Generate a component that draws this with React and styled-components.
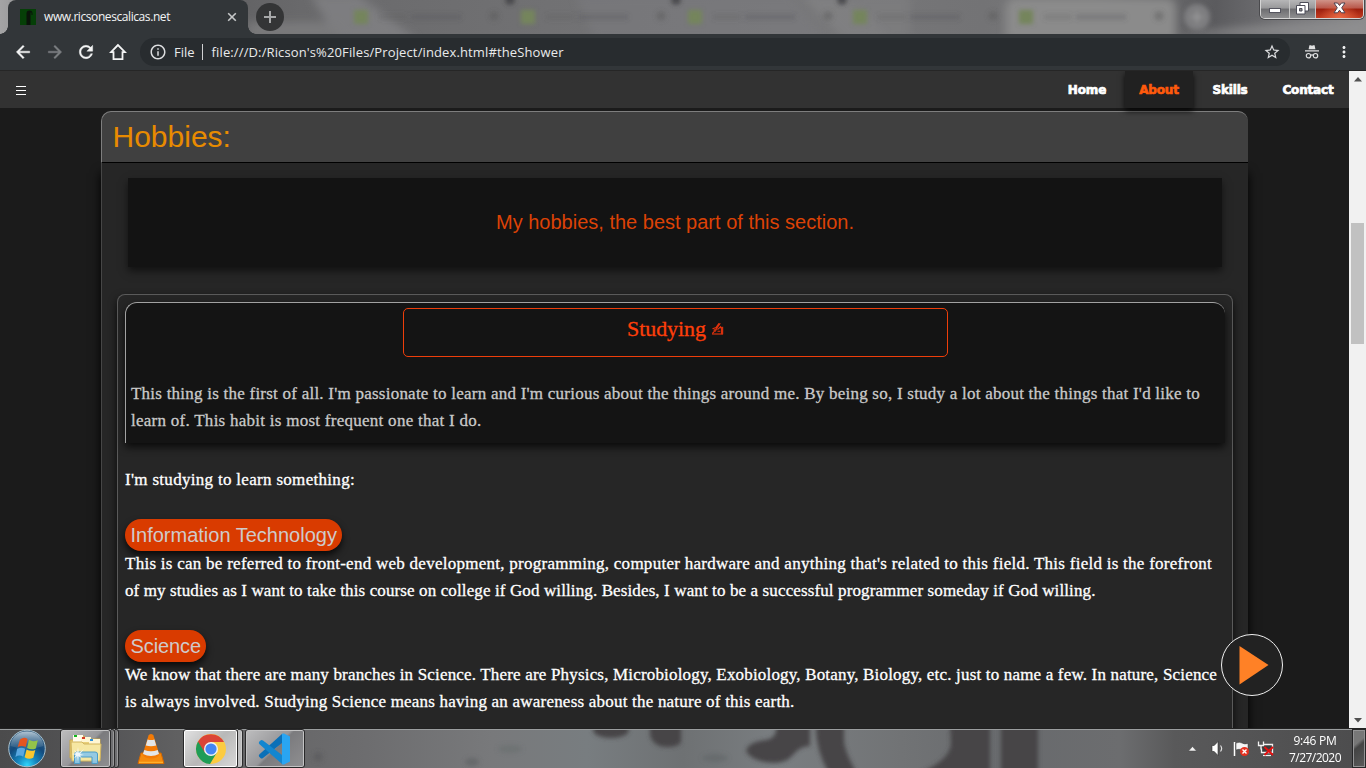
import React from 'react';
import styled, { createGlobalStyle, css } from 'styled-components';
import { MdArrowBack, MdArrowForward, MdRefresh, MdInfoOutline, MdStarBorder, MdMoreVert } from 'react-icons/md';

const GlobalStyle = createGlobalStyle`
  * { box-sizing: border-box; }
  body { margin: 0; overflow: hidden; background: #1b1b1b; }
`;

const uiFont = "'Open Sans', 'Noto Sans', sans-serif";
const sans = "'Liberation Sans', Arial, sans-serif";
const serif = "'Liberation Serif', 'Times New Roman', serif";

const Screen = styled.div`
  width: 1366px;
  height: 768px;
  display: flex;
  flex-direction: column;
  overflow: hidden;
  font-family: ${uiFont};
`;

/* ---------- Browser title bar ---------- */

const TitleBar = styled.header`
  position: relative;
  height: 34px;
  flex: none;
  display: flex;
  align-items: flex-start;
  overflow: hidden;
  background: #777779;
`;

const Glass = styled.svg`
  position: absolute;
  inset: 0;
  width: 100%;
  height: 100%;
`;

const Tab = styled.div`
  position: relative;
  width: 240px;
  height: 34px;
  margin-left: 8px;
  padding: 0 9px 0 12px;
  display: flex;
  align-items: center;
  background: #323639;
  border-radius: 8px 8px 0 0;

  &::before,
  &::after {
    content: '';
    position: absolute;
    bottom: 0;
    width: 8px;
    height: 8px;
  }
  &::before {
    left: -8px;
    background: radial-gradient(circle at 0 0, transparent 7.5px, #323639 8px);
  }
  &::after {
    right: -8px;
    background: radial-gradient(circle at 100% 0, transparent 7.5px, #323639 8px);
  }
`;

const TabTitle = styled.span`
  flex: 1;
  margin-left: 8px;
  font-size: 12px;
  letter-spacing: -0.418px;
  line-height: 34px;
  color: #f3f4f5;
  white-space: nowrap;
`;

const NewTab = styled.div`
  position: relative;
  width: 28px;
  height: 28px;
  margin: 3px 0 0 8px;
  border-radius: 50%;
  background: #343536;
  display: flex;
  align-items: center;
  justify-content: center;
`;

const WindowButtons = styled.div`
  position: relative;
  display: flex;
  width: 104px;
  height: 19px;
  margin-left: auto;
  margin-right: 2px;
  border: 1px solid #d5d5d5;
  border-top: 0;
  border-radius: 0 0 5px 5px;
  box-shadow: 0 0 0 1px #4a4a4d;
  overflow: hidden;
`;

const WindowButton = styled.div`
  width: ${p => p.$w}px;
  padding-bottom: 2px;
  display: flex;
  align-items: center;
  justify-content: center;
  border-left: ${p => (p.$first ? '0' : '1px solid #c4c4c4')};
  background: ${p =>
    p.$close
      ? 'radial-gradient(ellipse at 50% 100%, #ea6a45 0, transparent 60%), linear-gradient(#d09388 0, #b8574a 45%, #9c1f0e 50%, #c23c20 100%)'
      : 'linear-gradient(#b6b6b7 0, #98989a 45%, #6d6d70 50%, #8e8e90 100%)'};
`;

/* ---------- Browser toolbar ---------- */

const Toolbar = styled.div`
  height: 37px;
  flex: none;
  display: flex;
  align-items: center;
  padding: 0 13px 1px 14px;
  background: #323639;
  border-bottom: 1px solid #262626;
`;

const ToolButton = styled.span`
  width: 32px;
  display: flex;
  color: ${p => (p.$dim ? '#7c7f82' : '#f4f5f5')};
  svg {
    flex: none;
    margin-left: ${p => (p.$wide ? -2 : -1)}px;
  }
  ${p =>
    p.$bold &&
    css`
      path:last-child {
        stroke: currentColor;
        stroke-width: 0.5px;
      }
    `}
`;

const AddressBar = styled.div`
  flex: 1;
  height: 28px;
  margin: 0 15px 0 -2px;
  padding: 0 9px;
  display: flex;
  align-items: center;
  border-radius: 14px;
  background: #282c2f;
  color: #e9eaeb;
  font-size: 13px;
  line-height: 28px;
  svg { color: #dcdddf; }
`;

const Scheme = styled.span`
  margin-left: 7px;
  padding-right: 7px;
  height: 16px;
  line-height: 16px;
  border-right: 1px solid #d0d1d2;
`;

const Url = styled.span`
  flex: 1;
  margin-left: 9px;
  letter-spacing: 0.125px;
  white-space: nowrap;
`;

const Menu = styled.span`
  display: flex;
  margin-left: 16px;
  color: #f0f1f1;
`;

/* ---------- Web page ---------- */

const Viewport = styled.div`
  height: 657px;
  flex: none;
  display: flex;
  overflow: hidden;
`;

const Page = styled.div`
  position: relative;
  width: 1349px;
  display: flex;
  flex-direction: column;
  background: #1b1b1b;
`;

const NavBar = styled.nav`
  position: relative;
  z-index: 2;
  height: 37px;
  flex: none;
  display: flex;
  align-items: stretch;
  padding-left: 16px;
  background: #323232;
`;

const Burger = styled.div`
  width: 10px;
  height: 9px;
  margin: 15px auto 0 0;
  display: flex;
  flex-direction: column;
  justify-content: space-between;
`;

const BurgerLine = styled.i`
  height: 1px;
  background: #fff;
`;

const NavLink = styled.a`
  width: ${p => p.$w}px;
  margin-left: ${p => p.$ml || 0}px;
  text-align: center;
  font: 700 12px/38px 'DejaVu Sans', sans-serif;
  letter-spacing: -0.15px;
  -webkit-text-stroke: 0.7px currentColor;
  color: #fff;
  ${p =>
    p.$active &&
    css`
      color: #ff5a0c;
      background: #212121;
      box-shadow: 0 3px 6px rgba(0, 0, 0, 0.8);
    `}
`;

const Section = styled.section`
  width: 1147px;
  height: 617px;
  margin: 3px 0 0 101px;
  display: flex;
  flex-direction: column;
`;

const SectionTitle = styled.h1`
  position: relative;
  height: 52px;
  flex: none;
  margin: 0;
  padding-left: 10.5px;
  border-top: 1px solid #7e7e7e;
  border-left: 1px solid #7e7e7e;
  border-bottom: 1px solid #000;
  border-radius: 10px 10px 0 0;
  background: #404040;
  color: #e88b00;
  font: 400 30px/50px ${sans};
`;

const SectionBody = styled.div`
  flex: 1;
  padding: 15px 15px 0 15px;
  background: #262626;
  border-left: 1px solid #464646;
  box-shadow: 0 10px 10px #000;
`;

const Banner = styled.div`
  height: 89px;
  margin: 0 11px 27px;
  background: #131313;
  color: #dc4206;
  font: 400 20px/88px ${sans};
  text-align: center;
  box-shadow: 0 4px 8px rgba(0, 0, 0, 0.55);
`;

const Topic = styled.article`
  height: 440px;
  padding: 7px;
  border: 1px solid #5a5a5a;
  border-bottom: 0;
  border-radius: 8px 8px 0 0;
  box-shadow: 0 4px 8px rgba(0, 0, 0, 0.75);
`;

const TopicCard = styled.div`
  height: 141px;
  padding: 5px;
  background: #141414;
  border-top: 1px solid #a2a2a2;
  border-left: 1px solid #a2a2a2;
  border-radius: 12px 12px 0 0;
  box-shadow: 0 4px 8px rgba(0, 0, 0, 0.75);
`;

const TopicHeading = styled.h2`
  width: 545px;
  height: 49px;
  margin: 0 auto 23px;
  display: flex;
  justify-content: center;
  align-items: center;
  gap: 5px;
  padding-bottom: 8px;
  border: 1px solid #ee3e0a;
  border-radius: 5px;
  color: #ff3f0a;
  font: 400 22px/40px ${serif};
  letter-spacing: -0.059px;
  -webkit-text-stroke: 0.3px currentColor;
`;

const Paragraph = styled.p`
  margin: ${p => p.$shift || 0}px 0 0;
  padding-top: ${p => p.$top || 0}px;
  font: 400 17px/27px ${serif};
  color: ${p => p.$color || '#fff'};
  -webkit-text-stroke: 0.3px currentColor;
`;

const Line = styled.span`
  display: block;
  white-space: nowrap;
  letter-spacing: ${p => p.$ls}px;
`;

const Pill = styled.h3`
  width: max-content;
  height: 32px;
  margin: ${p => p.$top}px 0 0;
  padding: 0 5px 0 5.5px;
  border-radius: 16px;
  background: #d93b00;
  color: #cfcaca;
  font: 400 20px/32px ${sans};
  letter-spacing: ${p => p.$ls || 0}px;
  box-shadow: 0 4px 7px rgba(0, 0, 0, 0.75);
`;

const PlayButton = styled.button`
  position: absolute;
  right: 66px;
  bottom: 32px;
  width: 62px;
  height: 62px;
  padding: 0;
  border: 1px solid #f0f0f0;
  border-radius: 50%;
  background: #222;
  svg { display: block; }
`;

const Scrollbar = styled.div`
  width: 17px;
  display: flex;
  flex-direction: column;
  align-items: center;
  justify-content: space-between;
  padding: 6px 0 5px;
  background: #f1f1f1;
`;

const ScrollTrack = styled.div`
  flex: 1;
  padding-top: 141px;
`;

const ScrollThumb = styled.div`
  width: 13px;
  height: 121px;
  background: #c1c1c1;
`;

/* ---------- Taskbar ---------- */

const Taskbar = styled.footer`
  position: relative;
  height: 40px;
  flex: none;
  display: flex;
  background: #606164;
  border-top: 1px solid #222;
  overflow: hidden;
`;

const TaskIcon = styled.div`
  position: relative;
  width: ${p => p.$w}px;
  height: 39px;
  margin-left: ${p => p.$ml}px;
  display: flex;
  align-items: center;
  justify-content: center;
  ${p =>
    p.$open &&
    css`
      border: 1px solid #29292a;
      border-radius: 3px;
      box-shadow: inset 0 0 0 1px ${p.$bright ? '#fff' : '#c3c3c4'};
      background: ${p.$bright
        ? 'linear-gradient(135deg, #e2e2e2, #b8b8b8 50%, #d8d8d8)'
        : 'linear-gradient(135deg, #bebebf 0, #97979a 48%, #7b7b7e 52%, #8f8f91 100%)'};
    `}
`;

const StackEdge = styled.div`
  position: relative;
  width: ${p => p.$w || 4}px;
  height: 39px;
  border: 1px solid #2c2c2d;
  border-left: 0;
  border-radius: 0 3px 3px 0;
  background: ${p => (p.$bright ? '#bdbdbe' : '#6f6f71')};
  box-shadow: inset -1px 0 0 ${p => (p.$bright ? '#ccc' : '#9a9a9b')};
`;

const Tray = styled.div`
  position: relative;
  margin-left: auto;
  display: flex;
  align-items: center;
`;

const Clock = styled.div`
  width: 62px;
  margin: 0 6px 0 5px;
  display: flex;
  flex-direction: column;
  align-items: center;
  color: #fff;
  font-size: 12px;
  line-height: 17px;
`;

const ClockLine = styled.span`
  letter-spacing: ${p => p.$ls}px;
`;

const ShowDesktop = styled.div`
  width: 14px;
  height: 39px;
  border: 1px solid #262627;
  box-shadow: inset 0 0 0 1px #939394;
  background: linear-gradient(140deg, #777 0 35%, #444 45%, #5b5b5b 100%);
`;

/* ---------- Drawings ---------- */

const ghostTabs = [361, 528, 695, 860, 1026];

const TitleGlass = () => (
  <Glass viewBox="0 0 1366 34" preserveAspectRatio="none">
    <defs>
      <linearGradient id="glass" x1="0" x2="1">
        <stop offset="0" stopColor="#a4a4a5" />
        <stop offset=".01" stopColor="#9b9b9c" />
        <stop offset=".17" stopColor="#626264" />
        <stop offset=".22" stopColor="#69696b" />
        <stop offset=".4" stopColor="#717173" />
        <stop offset=".6" stopColor="#777779" />
        <stop offset=".72" stopColor="#737375" />
        <stop offset=".8" stopColor="#79797a" />
        <stop offset=".89" stopColor="#5b5b5e" />
        <stop offset=".95" stopColor="#77777a" />
        <stop offset="1" stopColor="#8b8b8c" />
      </linearGradient>
      <filter id="soft" x="-20%" y="-50%" width="140%" height="200%">
        <feGaussianBlur stdDeviation="4" />
      </filter>
      <filter id="softer" x="-20%" y="-50%" width="140%" height="200%">
        <feGaussianBlur stdDeviation="2.300" />
      </filter>
    </defs>
    <rect width="1366" height="34" fill="url(#glass)" />
    <g filter="url(#soft)">
      <path d="M310 -5h48l60 45h-80z" fill="#858587" opacity=".7" />
      <path d="M248 22h90l10 16h-100z" fill="#7e7e80" opacity=".8" />
      <path d="M575 -5h215l35 45h-230z" fill="#7c7c7f" opacity=".6" />
      <path d="M800 -5h45l45 45h-45z" fill="#858587" opacity=".6" />
      <path d="M850 -5h60v45h-30z" fill="#808082" opacity=".6" />
      <path d="M1006 40V8q0-10 12-10h148q10 0 10 10v32z" fill="#8b8b8b" />
      <path d="M1178 36h188V22q-120 0-188 14z" fill="#929293" opacity=".7" />
    </g>
    <g filter="url(#softer)">
      {ghostTabs.map(x => (
        <g key={x}>
          <rect x={x - 7} y="10" width="14" height="14" fill="#74855c" />
          <rect x={x + 18} y="14" width="28" height="6" fill="#555557" opacity=".2" />
          <rect x={x + 50} y="14" width="50" height="6" fill="#505052" opacity=".25" />
          <circle cx={x + 133} cy="16" r="5" fill="#59595b" opacity=".4" />
        </g>
      ))}
      {[510, 676, 842].map(x => (
        <circle key={x} cx={x} cy="0" r="5" fill="#414144" opacity=".8" />
      ))}
      <circle cx="1197" cy="17" r="13" fill="#7e7e80" />
      <path d="M1191 17h12M1197 11v12" stroke="#989899" strokeWidth="2" />
    </g>
  </Glass>
);

const Favicon = () => (
  <svg width="16" height="16" viewBox="0 0 16 16">
    <rect width="16" height="16" fill="#053f07" />
    <path d="M6.500 16V4.500Q6.500 1.500 9.500 1.500q3 0 3 3V6h-1V3.500H10.500V16z" fill="#0a130a" />
  </svg>
);

const HomeIcon = () => (
  <svg width="18" height="18" viewBox="0 0 18 18">
    <path d="M9 2 2 9.200h2.500V16.200h9V9.200H16z" fill="none" stroke="currentColor" strokeWidth="1.800" />
  </svg>
);

const Incognito = () => (
  <svg width="14" height="16" viewBox="0 0 14 16">
    <path d="M3.600 5.200 4.400 1.200h1.300l1.300.5 1.300-.5h1.300l.8 4zM0 6.200h14v1.200H0z" fill="#dfe0e1" />
    <g fill="none" stroke="#dfe0e1" strokeWidth="1.200">
      <circle cx="3.500" cy="11.700" r="2.200" />
      <circle cx="10.500" cy="11.700" r="2.200" />
      <path d="M5.700 11.200q1.300-.8 2.600 0" />
    </g>
  </svg>
);

const WritingHand = () => (
  <svg width="13" height="14" viewBox="0 0 13 14">
    <g fill="none" stroke="#e8330c" strokeWidth="1.100">
      <path d="M9.300 1.200 3.500 9.500M8 1.200 5 5.500M1.500 6.800 6 5.200M3 9.800 1.300 11.500M6.500 7.600l3-2.800.4 1.600M6.500 9.300h2.800" />
      <path d="M1 12h11" />
    </g>
    <path d="M2.600 7.500 6.500 6 5 9.500l-2.500.8z" fill="#c52d0e" />
    <path d="M9.900 4.800h2.300v7.400H9.900z" fill="#d8300d" />
  </svg>
);

const TaskbarGlass = () => (
  <Glass viewBox="0 0 1366 39" preserveAspectRatio="none">
    <defs>
      <linearGradient id="bar" x1="0" x2="1">
        <stop offset="0" stopColor="#4b4b4c" />
        <stop offset=".08" stopColor="#555557" />
        <stop offset=".13" stopColor="#606061" />
        <stop offset=".26" stopColor="#6c6c6e" />
        <stop offset=".36" stopColor="#78797b" />
        <stop offset=".43" stopColor="#787d80" />
        <stop offset=".5" stopColor="#6e7173" />
        <stop offset=".57" stopColor="#7a7e81" />
        <stop offset=".66" stopColor="#717375" />
        <stop offset=".74" stopColor="#686a6d" />
        <stop offset=".82" stopColor="#6c6d6f" />
        <stop offset=".86" stopColor="#59595a" />
        <stop offset="1" stopColor="#4c4c4d" />
      </linearGradient>
      <filter id="blur" x="-10%" y="-30%" width="120%" height="160%">
        <feGaussianBlur stdDeviation="2.200" />
      </filter>
    </defs>
    <rect width="1366" height="39" fill="url(#bar)" />
    <g filter="url(#blur)" fill="#474546">
      <ellipse cx="611" cy="1" rx="18" ry="8" />
      <path d="M650 -5h31v18q-2 5-14 5-14 0-17-12z" />
      <path d="M776 -5h34v22q-10 0-17 9-7 8-19 8-22-1-28-12 2-9 20-11 12-2 10-16z" />
      <path d="M816 -5h28v16q0 10 13 34h-28q-13-24-13-46z" />
      <path d="M950 -5h40v50h-72q32-14 33-30z" />
      <path d="M1001 -5h37v50h-37z" />
      <ellipse cx="318" cy="28" rx="5" ry="5" fill="#58585a" opacity=".6" />
      <ellipse cx="472" cy="33" rx="7" ry="4" fill="#606365" opacity=".7" />
      <ellipse cx="715" cy="29" rx="13" ry="4" fill="#616567" opacity=".6" />
      <ellipse cx="510" cy="20" rx="12" ry="4" fill="#6b6f71" opacity=".7" />
    </g>
    <rect width="1366" height="1" fill="#9b9e9f" />
  </Glass>
);

const StartOrb = () => (
  <svg width="40" height="39" viewBox="0 0 40 39">
    <defs>
      <radialGradient id="orb" cx=".5" cy=".95" r=".95">
        <stop offset="0" stopColor="#2fd5fa" />
        <stop offset=".28" stopColor="#1685bd" />
        <stop offset=".6" stopColor="#134a7c" />
        <stop offset="1" stopColor="#3d6484" />
      </radialGradient>
      <linearGradient id="shine" x1="0" x2="0" y1="0" y2="1">
        <stop offset="0" stopColor="#e4eef4" />
        <stop offset="1" stopColor="#6f93ab" stopOpacity=".3" />
      </linearGradient>
    </defs>
    <circle cx="20" cy="19.500" r="18.300" fill="url(#orb)" stroke="#a8c0cc" strokeWidth="1" />
    <path d="M3.500 17Q5 3 20 2.500 35 3 36.500 17 20 23 3.500 17z" fill="url(#shine)" opacity=".7" />
    <path d="M13 10.500q4-3 7.600-.5l-1.900 8q-4-2.200-8 0z" fill="#e5551f" />
    <path d="M22 10.800q4 2.600 8.800.4l-2 8.200q-4.500 2-8.700-.5z" fill="#93c34a" />
    <path d="M10.200 19.800q4-2.200 8-.1l-2 8q-3.600-2.300-7.800.2z" fill="#5aa7e0" />
    <path d="M19.600 20.500q4.200 2.400 8.700.5l-2 7.800q-4.300 2.300-8.700-.5z" fill="#fbc62e" />
  </svg>
);

const FolderIcon = () => (
  <svg width="34" height="32" viewBox="0 0 34 32">
    <path d="M1 7h6V3h8l2 3h14v19H1z" fill="#e9cf7a" stroke="#c7a64e" />
    <path d="M4 2h10v7H4z" fill="#fffceb" />
    <path d="M12 4h10v5H12zM20 6h11v5H20z" fill="#fff6d2" />
    <path d="M5 2h3v2H5z" fill="#12b51c" />
    <path d="M13 4h3v2h-3z" fill="#d53b27" />
    <path d="M21 6h3v2h-3z" fill="#2d8fd8" />
    <path d="M2 9h11l2 2h17l-1 17H3z" fill="#f6e7a2" stroke="#d1b55f" />
    <path d="M5.500 30.500V21q0-2 2.500-2h18q2.500 0 2.500 2v9.500H23V24H11v6.500z" fill="#8cc8e8" fillOpacity=".92" stroke="#4c9cc6" />
    <path d="m9 14 .8 6L15 16l-4 5 4 1-4 .6 2 3-3.500-2.500L9 28l-.8-5L5 25.500 7 22l-4-1 4-.7L5 17l3.200 2.600z" fill="#fff" opacity=".85" />
  </svg>
);

const VlcIcon = () => (
  <svg width="28" height="32" viewBox="0 0 28 32">
    <path d="M4 20h20l3 10.500H1z" fill="#f58a0c" stroke="#d56800" />
    <path d="M14 1q2 0 2.500 1.500L22.500 22q-3 3.500-8.500 3.500T5.500 22l6-19.500Q12 1 14 1z" fill="#f37a05" />
    <path d="m10.600 6.500-1.800 6q5.200 1.500 10.400 0l-1.800-6q-3.400 1-6.800 0zM7.300 17l-1.300 4q8 3.800 16 0l-1.300-4q-6.700 2.500-13.400 0z" fill="#e3e5e7" />
    <path d="M2 29.500h24" stroke="#ffb02b" strokeWidth="1.500" />
  </svg>
);

const ChromeIcon = () => (
  <svg width="32" height="32" viewBox="0 0 32 32">
    <circle cx="16" cy="16" r="15" fill="#fccb40" />
    <path d="M16 16 3 8.500A15 15 0 0 0 15 31l7.200-12z" fill="#1e9c57" />
    <path d="M3 8.500A15 15 0 0 1 29 9H16L9.800 19.600z" fill="#db4437" />
    <circle cx="16" cy="16" r="7" fill="#f2f2f2" />
    <circle cx="16" cy="16" r="5.600" fill="#4486f4" />
  </svg>
);

const CodeIcon = () => (
  <svg width="34" height="32" viewBox="0 0 34 32">
    <path d="M24 1v9L5 25q-1.500 1-2.500 0l-1.300-1.300q-1-1.300.3-2.400z" fill="#0a70b8" />
    <path d="M24 31v-9L5 7.500Q3.500 6.500 2.500 7.500L1.200 8.800q-1 1.300.3 2.400z" fill="#1286d0" />
    <path d="M24 .8q1-.6 2-.2l6 2.800v25.200l-6 2.800q-1 .4-2-.2z" fill="#29a5f2" />
  </svg>
);

const TrayIcons = () => (
  <svg width="92" height="22" viewBox="0 0 92 22">
    <path d="m1.500 13 4-4.500 4 4.500z" fill="#f4f4f4" stroke="#444" strokeWidth=".5" />
    <path d="M25 7.500h2.200L31 3.500v14l-3.800-4H25z" fill="#fff" stroke="#2e2e2e" strokeWidth=".6" />
    <path d="M33.500 7.500q2.300 3 0 6" fill="none" stroke="#e0e0e0" strokeWidth="1.200" />
    <path d="M47.500 4v14" stroke="#fff" strokeWidth="1.500" />
    <path d="M49 5q3.500-1.500 6 0t6 .5v7q-3 1-6-.5t-6 0z" fill="#f3f3f3" stroke="#333" strokeWidth=".5" />
    <circle cx="57.500" cy="13.500" r="4.500" fill="#e4301f" />
    <path d="m55.500 11.500 4 4m0-4-4 4" stroke="#fff" strokeWidth="1.400" />
    <path d="M76 6.500h9.500v8H74.500v-4" fill="#3c3c3d" stroke="#f2f2f2" strokeWidth="1.300" />
    <path d="M76 17.500h8" stroke="#f2f2f2" strokeWidth="1.200" />
    <path d="M71.500 3.500v4h5v-4M74 7.500v4" fill="none" stroke="#f2f2f2" strokeWidth="1.300" />
    <path d="m77.500 9 8.500 8m0-8-8.500 8" stroke="#e60f0f" strokeWidth="1.900" />
  </svg>
);

export default function App() {
  return (
    <Screen>
      <GlobalStyle />
      <TitleBar>
        <TitleGlass />
        <Tab>
          <Favicon />
          <TabTitle>www.ricsonescalicas.net</TabTitle>
          <svg width="14" height="14" viewBox="0 0 14 14">
            <path d="m3.200 3.200 7.600 7.600m0-7.600-7.600 7.600" stroke="#c6c8c9" strokeWidth="1.600" />
          </svg>
        </Tab>
        <NewTab>
          <svg width="14" height="14" viewBox="0 0 14 14">
            <path d="M1 7h12M7 1v12" stroke="#a7a8a9" strokeWidth="2" />
          </svg>
        </NewTab>
        <WindowButtons>
          <WindowButton $w={28} $first>
            <svg width="12" height="12" viewBox="0 0 12 12">
              <rect x=".5" y="6.500" width="11" height="4" fill="#fff" stroke="#55555f" />
            </svg>
          </WindowButton>
          <WindowButton $w={27}>
            <svg width="13" height="13" viewBox="0 0 13 13">
              <path d="M4 .5h8.500V9H4z" fill="#fff" stroke="#4d4d58" />
              <path d="M.5 3.500H9V12H.5z" fill="#fff" stroke="#4d4d58" />
              <path d="M3.500 6.500H6V9H3.500z" fill="#888" stroke="#4d4d58" />
            </svg>
          </WindowButton>
          <WindowButton $w={48} $close>
            <svg width="13" height="12" viewBox="0 0 13 12">
              <path
                d="M1 1h3.500l2 2.500L8.500 1H12L8.700 5.800 12 10.800H8.500l-2-2.600-2 2.600H1l3.300-5z"
                fill="#fff"
                stroke="#4d4251"
              />
            </svg>
          </WindowButton>
        </WindowButtons>
      </TitleBar>

      <Toolbar>
        <ToolButton $bold><MdArrowBack size={20} /></ToolButton>
        <ToolButton $bold $dim><MdArrowForward size={20} /></ToolButton>
        <ToolButton $bold $wide><MdRefresh size={20} /></ToolButton>
        <ToolButton><HomeIcon /></ToolButton>
        <AddressBar>
          <MdInfoOutline size={18} />
          <Scheme>File</Scheme>
          <Url>file:///D:/Ricson's%20Files/Project/index.html#theShower</Url>
          <MdStarBorder size={18} />
        </AddressBar>
        <Incognito />
        <Menu><MdMoreVert size={18} /></Menu>
      </Toolbar>

      <Viewport>
        <Page>
          <NavBar>
            <Burger>
              <BurgerLine />
              <BurgerLine />
              <BurgerLine />
            </Burger>
            <NavLink $w={68}>Home</NavLink>
            <NavLink $w={68} $ml={4} $active>About</NavLink>
            <NavLink $w={66} $ml={4}>Skills</NavLink>
            <NavLink $w={82} $ml={4}>Contact</NavLink>
          </NavBar>

          <Section>
            <SectionTitle>Hobbies:</SectionTitle>
            <SectionBody>
              <Banner>My hobbies, the best part of this section.</Banner>
              <Topic>
                <TopicCard>
                  <TopicHeading>
                    Studying
                    <WritingHand />
                  </TopicHeading>
                  <Paragraph $color="#c9c9c9">
                    <Line $ls={0.235}>
                      This thing is the first of all. I'm passionate to learn and I'm curious about the things around
                      me. By being so, I study a lot about the things that I'd like to
                    </Line>
                    <Line $ls={0.264}>learn of. This habit is most frequent one that I do.</Line>
                  </Paragraph>
                </TopicCard>
                <Paragraph $top={23}>
                  <Line $ls={0.304}>I'm studying to learn something:</Line>
                </Paragraph>
                <Pill $top={26}>Information Technology</Pill>
                <Paragraph $shift={-1}>
                  <Line $ls={0.264}>
                    This is can be referred to front-end web development, programming, computer hardware and anything
                    that's related to this field. This field is the forefront
                  </Line>
                  <Line $ls={0.117}>
                    of my studies as I want to take this course on college if God willing. Besides, I want to be a
                    successful programmer someday if God willing.
                  </Line>
                </Paragraph>
                <Pill $top={26} $ls={-0.1}>Science</Pill>
                <Paragraph $shift={-1}>
                  <Line $ls={0.176}>
                    We know that there are many branches in Science. There are Physics, Microbiology, Exobiology,
                    Botany, Biology, etc. just to name a few. In nature, Science
                  </Line>
                  <Line $ls={0.212}>
                    is always involved. Studying Science means having an awareness about the nature of this earth.
                  </Line>
                </Paragraph>
              </Topic>
            </SectionBody>
          </Section>

          <PlayButton aria-label="Play">
            <svg width="60" height="60" viewBox="0 0 60 60">
              <path d="M17.500 11 46.500 30 17.500 49.500z" fill="#ff8126" />
            </svg>
          </PlayButton>
        </Page>
        <Scrollbar>
          <svg width="8" height="5" viewBox="0 0 8 5"><path d="M4 0 8 4.500H0z" fill="#505050" /></svg>
          <ScrollTrack><ScrollThumb /></ScrollTrack>
          <svg width="8" height="5" viewBox="0 0 8 5"><path d="M4 4.500 8 0H0z" fill="#505050" /></svg>
        </Scrollbar>
      </Viewport>

      <Taskbar>
        <TaskbarGlass />
        <TaskIcon $w={40} $ml={7}><StartOrb /></TaskIcon>
        <TaskIcon $w={51} $ml={13} $open><FolderIcon /></TaskIcon>
        <StackEdge />
        <StackEdge />
        <TaskIcon $w={28} $ml={18}><VlcIcon /></TaskIcon>
        <TaskIcon $w={55} $ml={18} $open $bright><ChromeIcon /></TaskIcon>
        <StackEdge $bright $w={5} />
        <TaskIcon $w={60} $ml={2} $open><CodeIcon /></TaskIcon>
        <Tray>
          <TrayIcons />
          <Clock>
            <ClockLine $ls={-0.268}>9:46 PM</ClockLine>
            <ClockLine $ls={-0.538}>7/27/2020</ClockLine>
          </Clock>
          <ShowDesktop />
        </Tray>
      </Taskbar>
    </Screen>
  );
}
